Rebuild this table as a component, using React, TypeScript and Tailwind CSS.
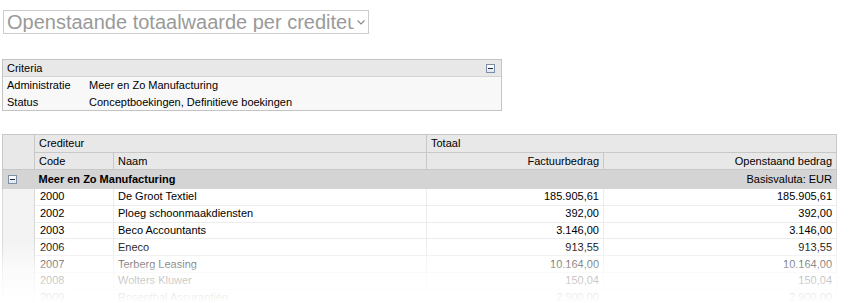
import React from "react";

const rows = [
  ["2000", "De Groot Textiel", "185.905,61", "185.905,61"],
  ["2002", "Ploeg schoonmaakdiensten", "392,00", "392,00"],
  ["2003", "Beco Accountants", "3.146,00", "3.146,00"],
  ["2006", "Eneco", "913,55", "913,55"],
  ["2007", "Terberg Leasing", "10.164,00", "10.164,00"],
  ["2008", "Wolters Kluwer", "150,04", "150,04"],
  ["2009", "Rosenthal Assurantiën", "2.900,00", "2.900,00"],
  ["2010", "KPN", "120,00", "120,00"],
];

function MinusBox() {
  return (
    <span className="inline-flex h-[9px] w-[9px] items-center justify-center border border-[#7d8fa8] bg-gradient-to-b from-white to-[#dfe6ee]">
      <span className="block h-[1px] w-[5px] bg-[#1a2a44]" />
    </span>
  );
}

export default function App() {
  return (
    <div
      className="relative h-[303px] w-[851px] overflow-hidden bg-white text-[11px] text-black"
      style={{ fontFamily: '"Liberation Sans", Arial, sans-serif' }}
    >
      <div className="pl-[3px] pt-[10px]">
        <div className="flex h-[24px] w-[366px] items-center overflow-hidden border border-[#cccccc] bg-white pl-[3px]">
          <span className="flex-1 overflow-hidden whitespace-nowrap text-[20px] leading-none text-[#9a9a9a]">
            Openstaande totaalwaarde per crediteur
          </span>
          <span className="flex w-[14px] shrink-0 items-center justify-center bg-white">
            <svg width="8" height="5" viewBox="0 0 8 5">
              <path d="M0.5 0.5 L4 4 L7.5 0.5" fill="none" stroke="#8a8a8a" strokeWidth="1.2" />
            </svg>
          </span>
        </div>
      </div>

      <div className="ml-[2px] mt-[25px] w-[500px] border border-[#c4c4c4] bg-[#f8f8f8]">
        <div className="flex h-[17px] items-center justify-between border-b border-[#d4d4d4] bg-[#e8e8e8] pl-[4px] pr-[6px]">
          <span>Criteria</span>
          <MinusBox />
        </div>
        <div className="flex h-[16px] items-center pl-[4px] pt-[1px]">
          <span className="w-[82px]">Administratie</span>
          <span>Meer en Zo Manufacturing</span>
        </div>
        <div className="flex h-[17px] items-center pl-[4px] pt-[1px]">
          <span className="w-[82px]">Status</span>
          <span>Conceptboekingen, Definitieve boekingen</span>
        </div>
      </div>

      <table className="ml-[2px] mt-[23px] w-[834px] table-fixed border-collapse">
        <colgroup>
          <col className="w-[32px]" />
          <col className="w-[79px]" />
          <col className="w-[313px]" />
          <col className="w-[177px]" />
          <col className="w-[233px]" />
        </colgroup>
        <thead>
          <tr className="h-[17px] bg-[#e8e8e8]">
            <th rowSpan={2} className="border border-[#c8c8c8] bg-[#e8e8e8]" />
            <th colSpan={2} className="border border-[#c8c8c8] px-[4px] text-left font-normal">
              Crediteur
            </th>
            <th colSpan={2} className="border border-[#c8c8c8] px-[4px] text-left font-normal">
              Totaal
            </th>
          </tr>
          <tr className="h-[17px] bg-[#e8e8e8]">
            <th className="border border-[#c8c8c8] px-[4px] text-left font-normal">Code</th>
            <th className="border border-[#c8c8c8] px-[4px] text-left font-normal">Naam</th>
            <th className="border border-[#c8c8c8] px-[4px] text-right font-normal">Factuurbedrag</th>
            <th className="border border-[#c8c8c8] px-[4px] text-right font-normal">Openstaand bedrag</th>
          </tr>
        </thead>
        <tbody>
          <tr className="h-[19px] bg-[#d4d4d4]">
            <td className="border-l border-[#c8c8c8] pl-[5px] align-middle">
              <span className="flex items-center">
                <MinusBox />
              </span>
            </td>
            <td colSpan={4} className="border-r border-[#c8c8c8] px-[4px]">
              <div className="flex justify-between">
                <span className="font-bold">Meer en Zo Manufacturing</span>
                <span>Basisvaluta: EUR</span>
              </div>
            </td>
          </tr>
          {rows.map((r) => (
            <tr key={r[0]} className="h-[16.8px]">
              <td className="border-l border-r border-[#d8d8d8] bg-[#f3f3f3]" />
              <td className="border-b border-r border-[#ececec] px-[4px] pl-[5px] leading-[15px]">{r[0]}</td>
              <td className="border-b border-r border-[#ececec] px-[4px] leading-[15px]">{r[1]}</td>
              <td className="border-b border-r border-[#ececec] px-[4px] text-right leading-[15px]">{r[2]}</td>
              <td className="border-b border-r border-[#ececec] px-[4px] text-right leading-[15px]">{r[3]}</td>
            </tr>
          ))}
        </tbody>
      </table>

      <div className="pointer-events-none absolute bottom-0 left-0 h-[62px] w-full bg-gradient-to-b from-white/0 via-white/70 to-white" />
    </div>
  );
}
